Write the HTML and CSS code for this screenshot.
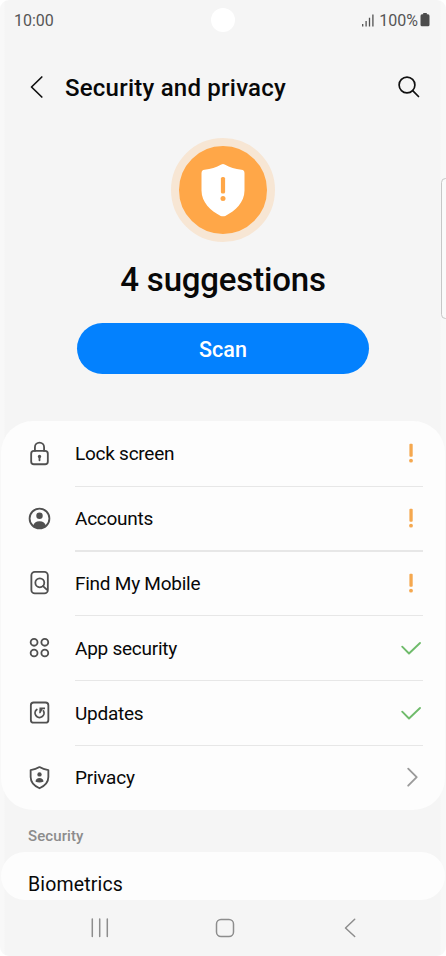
FILE: index.html
```html
<!DOCTYPE html>
<html lang="en">
<head>
<meta charset="utf-8">
<title>Security and privacy</title>
<link rel="stylesheet" href="styles.css">
</head>
<body>
<div class="phone">
  <header class="status">
    <span class="time">10:00</span>
    <span class="camera"></span>
    <span class="status-right">
      <svg class="signal" width="12" height="13" viewBox="0 0 12 13" stroke="#505050" stroke-width="1.3"><path d="M.7 12.5V10M4.1 12.5V7M7.5 12.5V3.800M10.900 12.500V.5"/></svg>
      <span class="percent">100%</span>
      <svg width="10" height="14" viewBox="0 0 10 14" fill="#4c4c4c"><path d="M3.200 0H6.800V1.300H8A1.600 1.600 0 0 1 9.500 2.900V11.800A1.500 1.500 0 0 1 8 13.300H2A1.500 1.500 0 0 1 .5 11.800V2.900A1.600 1.600 0 0 1 2 1.300H3.200Z"/></svg>
    </span>
  </header>
  <div class="titlebar">
    <svg class="back" width="14" height="24" viewBox="0 0 14 24"><path d="M11.800 2L1.500 12L11.800 22"/></svg>
    <h1>Security and privacy</h1>
    <svg class="search" width="24" height="24" viewBox="0 0 24 24"><circle cx="10" cy="10" r="7.900"/><path d="M15.700 15.700L21.500 21.500"/></svg>
  </div>
  <section class="summary">
    <div class="badge">
      <svg width="44" height="54" viewBox="0 0 44 54"><path fill="#fff" d="M20.300 1.500Q22 .7 23.700 1.500C29 4.600 34 6.100 40.500 6.700Q43.500 7.100 43.500 10.200V27.500C43.500 39 34.500 48 24.300 52.900Q22 53.700 19.700 52.900C9.500 48 .5 39 .5 27.500V10.200Q.5 7.100 3.500 6.700C10 6.100 15 4.600 20.300 1.500Z"/><rect x="19.900" y="14" width="4.200" height="16.500" rx="1.600" fill="#ffa748"/><circle cx="22" cy="35.400" r="2.500" fill="#ffa748"/></svg>
    </div>
    <h2>4 suggestions</h2>
    <button class="scan">Scan</button>
  </section>
  <ul class="card">
    <li>
      <svg class="icon" viewBox="0 0 24 24"><rect x="4" y="9.500" width="16" height="12.800" rx="2.700"/><path d="M7.600 9.500V6A4.400 4.400 0 0 1 16.400 6V9.500M12 15.500V18.500"/><circle class="solid" cx="12" cy="14.800" r="1.600"/></svg>
      <span>Lock screen</span>
      <svg class="mark warn" viewBox="0 0 22 22"><rect x="9.400" y="1.700" width="3.300" height="13" rx="1"/><circle cx="11" cy="18.700" r="1.900"/></svg>
    </li>
    <li>
      <svg class="icon" viewBox="0 0 24 24"><circle cx="12" cy="12" r="9.500"/><circle class="solid" cx="12" cy="9.300" r="3.100"/><path class="solid" d="M5.900 19.300C6.300 16.300 8.700 14.700 12 14.700S17.700 16.300 18.100 19.300Q12 24 5.900 19.300Z"/></svg>
      <span>Accounts</span>
      <svg class="mark warn" viewBox="0 0 22 22"><rect x="9.400" y="1.700" width="3.300" height="13" rx="1"/><circle cx="11" cy="18.700" r="1.900"/></svg>
    </li>
    <li>
      <svg class="icon" viewBox="0 0 24 24"><rect x="4.200" y="1.800" width="15.800" height="20.600" rx="3.300"/><circle cx="12.300" cy="12.300" r="4.300"/><path d="M15.400 15.400L19 18.800"/></svg>
      <span>Find My Mobile</span>
      <svg class="mark warn" viewBox="0 0 22 22"><rect x="9.400" y="1.700" width="3.300" height="13" rx="1"/><circle cx="11" cy="18.700" r="1.900"/></svg>
    </li>
    <li>
      <svg class="icon" viewBox="0 0 24 24"><circle cx="6.800" cy="7" r="3.300"/><circle cx="17.100" cy="7" r="3.300"/><circle cx="6.800" cy="17.300" r="3.300"/><circle cx="17.100" cy="17.300" r="3.300"/></svg>
      <span>App security</span>
      <svg class="mark ok" viewBox="0 0 22 22"><path d="M2.200 9.700L9 16.500L20 6"/></svg>
    </li>
    <li>
      <svg class="icon" viewBox="0 0 24 24"><rect x="3.700" y="2.400" width="16.800" height="19.400" rx="2.700"/><path d="M9.400 9.100A4.300 4.300 0 1 0 15.800 10.400"/><path class="solid" d="M12 7.300H17.300V8.900H15L12.900 12.700H11.700Z"/></svg>
      <span>Updates</span>
      <svg class="mark ok" viewBox="0 0 22 22"><path d="M2.200 9.700L9 16.500L20 6"/></svg>
    </li>
    <li>
      <svg class="icon" viewBox="0 0 24 24"><path d="M12 2Q15.500 4.200 20.500 4.900V11.500C20.500 17 16.500 20.300 12 22.300C7.500 20.300 3.500 17 3.500 11.500V4.900Q8.500 4.200 12 2Z"/><circle class="solid" cx="12" cy="9" r="2.100"/><path class="solid" d="M8.200 16C8.200 13.500 9.800 12.400 12 12.400S15.800 13.500 15.800 16Q12 17.500 8.200 16Z"/></svg>
      <span>Privacy</span>
      <svg class="mark more" viewBox="0 0 22 22"><path d="M8.200 2.700L16.700 11.200L8.200 19.700"/></svg>
    </li>
  </ul>
  <h3>Security</h3>
  <div class="card partial">Biometrics</div>
  <nav>
    <svg width="18" height="20" viewBox="0 0 18 20"><path d="M1.300 1V18.500M8.700 1V18.500M16.300 1V18.500"/></svg>
    <svg class="home" width="20" height="20" viewBox="0 0 20 20"><rect x="1.500" y="1.500" width="17" height="17" rx="4.500"/></svg>
    <svg width="12" height="20" viewBox="0 0 12 20"><path d="M10.700 1.200L1.500 10L10.700 18.500"/></svg>
  </nav>
  <span class="edge-handle"></span>
</div>
</body>
</html>
```
FILE: styles.css
```css
* { box-sizing: border-box; }
body { margin: 0; background: #fff; font-family: Roboto, sans-serif; color: #080808; }
h1, h2, h3, ul { margin: 0; padding: 0; font-weight: 500; }
svg { display: block; flex: none; }

.phone {
  position: relative;
  width: 446px;
  height: 956px;
  overflow: hidden;
  display: flex;
  flex-direction: column;
  border-radius: 9px;
  background: linear-gradient(90deg, #f8f8f8 4px, #f5f5f5 5px, #f5f5f5 440px, #f8f8f8 441px);
}

.status {
  height: 40px;
  padding: 0 16px 0 14px;
  display: grid;
  grid-template-columns: 1fr 24px 1fr;
  align-items: center;
  font-size: 16px;
  color: #555;
}
.camera { width: 24px; height: 24px; margin-top: -1px; margin-left: 1px; border-radius: 50%; background: #fff; }
.status-right { display: flex; align-items: center; justify-content: flex-end; }
.percent { margin: 0 2px 0 5px; }

.titlebar { height: 94px; padding: 0 25px 0 29.5px; display: flex; align-items: center; }
.titlebar svg { fill: none; stroke: #111; stroke-width: 1.7; stroke-linecap: round; stroke-linejoin: round; }
h1 { flex: 1; margin-left: 21.500px; padding-top: 2px; font-size: 24px; line-height: 32px; letter-spacing: .23px; white-space: nowrap; }

.summary { height: 287px; padding-top: 4px; display: flex; flex-direction: column; align-items: center; }
.badge {
  width: 104px;
  height: 104px;
  border: 8px solid #f7e6d4;
  border-radius: 50%;
  background: #ffa748;
  display: flex;
  align-items: center;
  justify-content: center;
}
h2 { margin-top: 18px; font-size: 33px; line-height: 40px; letter-spacing: -.18px; }
.scan {
  margin-top: 23px;
  width: 292px;
  height: 51px;
  padding: 2px 0 0;
  border: 0;
  border-radius: 26px;
  background: #0381fe;
  color: #fff;
  font: 500 21.500px Roboto, sans-serif;
}

.card { flex: none; margin: 0 1px; border-radius: 32px; background: #fdfdfd; list-style: none; font-size: 19px; font-weight: 400; }
.card li {
  position: relative;
  height: 64.8px;
  margin: 0 23px 0 26px;
  display: flex;
  align-items: center;
}
.card li span { flex: 1; margin-left: 23px; padding-top: 1px; letter-spacing: -.25px; }
.card li:not(:last-child)::after {
  content: "";
  position: absolute;
  left: 47.5px;
  right: -1px;
  bottom: -1px;
  height: 1.300px;
  background: #e7e7e7;
}
.icon { width: 25px; height: 25px; fill: none; stroke: #505050; stroke-width: 1.75; stroke-linecap: round; stroke-linejoin: round; }
.icon .solid { fill: #505050; stroke: none; }
.mark { width: 22px; height: 22px; fill: none; stroke-linecap: round; stroke-linejoin: round; stroke-width: 1.9; }
.warn { fill: #f5a84f; }
.ok { stroke: #6fbb6b; }
.more { stroke: #9b9b9b; }

h3 { height: 42px; padding-left: 28px; font-size: 15px; line-height: 53px; letter-spacing: .1px; color: #8c8c8c; }
.partial { height: 48px; padding-left: 27px; border-radius: 32px; font-size: 19.500px; line-height: 65px; letter-spacing: .15px; overflow: hidden; }

nav { height: 56px; padding: 0 90px 0 91px; display: flex; align-items: center; justify-content: space-between; }
nav svg { fill: none; stroke: #8d8d8d; stroke-width: 1.5; stroke-linecap: round; stroke-linejoin: round; }
.home { margin-right: 4px; }

.edge-handle {
  position: absolute;
  right: -4px;
  top: 178px;
  width: 9px;
  height: 141px;
  border: 1.400px solid #c7c7c7;
  border-radius: 5px;
  background: #fafafa;
}
```
